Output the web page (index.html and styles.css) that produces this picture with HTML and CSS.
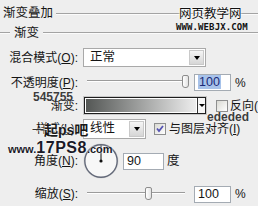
FILE: index.html
```html
<!DOCTYPE html>
<html>
<head>
<meta charset="utf-8">
<link rel="stylesheet" href="styles.css">
</head>
<body>
<div class="panel">
  <div class="title-row"><span class="title">渐变叠加</span><span class="rule"></span></div>
  <div class="group-row"><span class="rule lead"></span><span class="group">渐变</span><span class="rule"></span></div>

  <div class="row row-blend">
    <span class="lbl">混合模式(<u>O</u>):</span>
    <div class="select sel-blend"><span class="sel-text">正常</span><span class="sel-btn"><i class="arrow"></i></span></div>
  </div>

  <div class="row row-opacity">
    <span class="lbl">不透明度(<u>P</u>):</span>
    <div class="slider"><span class="track"></span><span class="thumb" style="left:99px"></span></div>
    <span class="field"><span class="hl">100</span></span>
    <span class="unit">%</span>
  </div>

  <div class="row row-grad">
    <span class="lbl">渐变:</span>
    <div class="grad"><span class="grad-fill"></span><span class="grad-btn"><i class="arrow small"></i></span></div>
    <span class="check cb-rev"></span>
    <span class="cb-text">反向(</span>
  </div>

  <div class="row row-style">
    <span class="lbl">样式(<u>L</u>):</span>
    <div class="select sel-style"><span class="sel-text">线性</span><span class="sel-btn"><i class="arrow"></i></span></div>
    <span class="check cb-align"><svg width="10" height="10" viewBox="0 0 10 10"><polyline points="2,4.5 4,7 8,2" fill="none" stroke="#5553b3" stroke-width="1.8"/></svg></span>
    <span class="cb-text align-text">与图层对齐(<u>I</u>)</span>
  </div>

  <div class="row row-angle">
    <span class="lbl">角度(<u>N</u>):</span>
    <svg class="dial" width="36" height="36" viewBox="0 0 36 36">
      <circle cx="18" cy="18" r="17" fill="#f7f7f7" stroke="#d8d8d8" stroke-width="1"/>
      <circle cx="18" cy="18" r="16.2" fill="none" stroke="#626878" stroke-width="1.4"/>
      <line x1="18" y1="18" x2="18" y2="2.5" stroke="#111" stroke-width="1"/>
      <circle cx="18" cy="18" r="1.6" fill="#111"/>
    </svg>
    <span class="field field-angle">90</span>
    <span class="unit deg">度</span>
  </div>

  <div class="row row-scale">
    <span class="lbl">缩放(<u>S</u>):</span>
    <div class="slider"><span class="track"></span><span class="thumb" style="left:62px"></span></div>
    <span class="field">100</span>
    <span class="unit">%</span>
  </div>

  <span class="wm wm-cn">网页教学网</span>
  <span class="wm wm-en">WWW.WEBJX.COM</span>
  <span class="note note-a">545755</span>
  <span class="note note-b">ededed</span>
  <span class="wm wm-ps"><span class="thin">一</span>起ps吧</span>
  <span class="wm wm-17"><span class="sm">www.</span><span class="big">17PS8</span><span class="sm">.com</span></span>
</div>
</body>
</html>
```
FILE: styles.css
```css
* { box-sizing: border-box; }
html, body { margin: 0; padding: 0; }
body { background: #eeeeee; }

.panel {
  position: relative;
  width: 258px;
  height: 206px;
  overflow: hidden;
  background: #eeeeee;
  color: #151515;
  font-family: "Liberation Sans", "Noto Sans CJK SC", sans-serif;
  font-size: 12px;
  line-height: 14px;
}

.title-row { display: flex; align-items: center; height: 25px; padding-left: 3px; }
.title { font-size: 12.5px; }
.rule { flex: 1; height: 2px; border-top: 1px solid #a3a3a3; border-bottom: 1px solid #fbfbfb; }
.title-row .rule { margin-left: 3px; margin-top: 2px; }
.group-row { display: flex; align-items: center; height: 16px; }
.group-row .lead { flex: 0 0 10px; }
.group { margin: 0 4px; font-size: 12.5px; }

.row { display: flex; align-items: center; }
.lbl { flex: none; width: 78px; margin-right: 5px; text-align: right; white-space: nowrap; }

.row-blend { margin-top: 7px; height: 19px; }
.row-opacity { margin-top: 7px; height: 17px; }
.row-grad { margin-top: 6px; height: 17px; }
.row-style { margin-top: 5px; height: 20px; }
.row-angle { margin-top: 4px; height: 36px; }
.row-scale { margin-top: 7px; height: 16px; }

.select { flex: none; display: flex; border: 1px solid #a9a9a9; background: #fff; height: 100%; }
.sel-blend { width: 123px; }
.sel-style { width: 63px; }
.sel-text { flex: 1; padding-left: 6px; font-size: 12.5px; line-height: 17px; }
.sel-btn {
  width: 15px;
  margin: 1px;
  border: 1px solid #c9c9c9;
  background: linear-gradient(#f5f5f5, #d6d6d6);
  display: flex; align-items: center; justify-content: center;
}
.arrow { width: 0; height: 0; border-left: 3.5px solid transparent; border-right: 3.5px solid transparent; border-top: 4px solid #000; }
.arrow.small { border-left-width: 3px; border-right-width: 3px; border-top-width: 3px; }

.slider { position: relative; flex: none; width: 111px; height: 100%; }
.track { position: absolute; left: 4px; width: 98px; top: 6px; height: 2px; border-top: 1px solid #9b9b9b; border-bottom: 1px solid #ffffff; }
.thumb {
  position: absolute; top: 1px; width: 7px; height: 13px;
  border: 1px solid #8d8d8d; border-radius: 2px 2px 3px 3px;
  background: linear-gradient(90deg, #ffffff, #e2e2e2);
}

.field {
  flex: none; width: 37px; height: 17px;
  border: 1px solid #a4abb3; background: #fff;
  padding-left: 3px; font-size: 12.5px; line-height: 15px;
}
.hl { background: #a7c2ea; color: #1b2a78; padding: 0 1px; }
.unit { margin-left: 4px; }

.grad {
  flex: none; display: flex; width: 122px; height: 17px; margin-left: 1px;
  border: 1px solid #1e1e1e; box-shadow: 0 0 0 1px #c8c8c8; background: #fff;
}
.grad-fill { flex: 1; margin: 1px; background: linear-gradient(90deg, #545755, #ededed); }
.grad-btn { width: 8px; border-left: 1px solid #333; display: flex; align-items: center; justify-content: center; background: #f6f6f6; }

.check {
  flex: none; width: 12px; height: 12px;
  border: 1px solid #8e8f8f;
  background: linear-gradient(135deg, #d9d9d3, #ffffff);
  display: flex; align-items: center; justify-content: center;
}
.cb-rev { margin-left: 10px; }
.cb-align { margin-left: 8px; }
.cb-text { margin-left: 2px; white-space: nowrap; }
.align-text { margin-left: 3px; }

.dial { flex: none; display: block; }
.field-angle { width: 41px; margin-left: 4px; }
.deg { margin-left: 3px; font-size: 12.5px; }

.wm, .note { position: absolute; white-space: nowrap; }
.wm-cn {
  left: 179px; top: 7px; font-size: 12.5px; line-height: 14px; color: #111;
  text-shadow: 0 0 2px #fff, 0 0 2px #fff, 0 0 1px #fff;
}
.wm-en {
  left: 176px; top: 23px; font-family: "DejaVu Sans Mono", monospace; font-weight: bold;
  font-size: 9px; line-height: 9px; letter-spacing: 0.1px; color: #111;
}
.note {
  font-family: "Liberation Sans", sans-serif; font-weight: bold; font-size: 12px; line-height: 12px;
  color: #3c3c3c; text-shadow: 0 0 1px #fff;
}
.note-a { left: 33px; top: 91px; }
.note-b { left: 207px; top: 111px; }
.wm-ps {
  left: 32px; top: 122px; font-size: 14px; line-height: 17px; font-weight: bold; color: #1a1a1a;
  font-family: "Liberation Sans", "Noto Sans CJK SC", sans-serif;
  text-shadow: 0 0 2px #fff, 0 0 2px #fff;
}
.wm-ps .thin { font-weight: normal; color: #333; font-size: 12px; }
.wm-17 {
  left: 8px; top: 141px; font-family: "Liberation Sans", sans-serif; font-weight: bold; color: #1a1a28;
  text-shadow: 0 0 2px #fff, 0 0 1px #fff;
}
.wm-17 .sm { font-size: 11px; }
.wm-17 .big { font-size: 16px; letter-spacing: 0.5px; }
```
